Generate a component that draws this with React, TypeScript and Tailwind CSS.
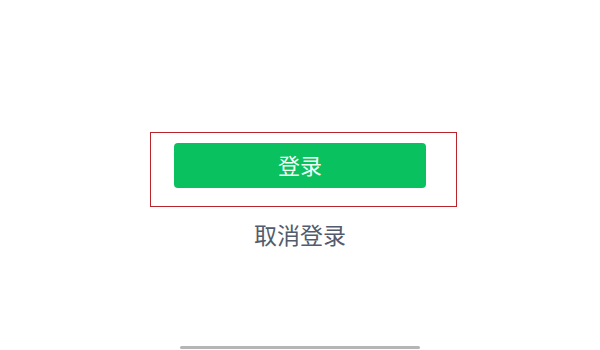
export default function App() {
  return (
    <div
      className="w-[600px] h-[350px] bg-white flex flex-col items-center overflow-hidden"
      style={{ fontFamily: '"Noto Sans CJK SC", "Noto Sans", sans-serif' }}
    >
      <div className="mt-[132px] ml-[7px] w-[307px] h-[75px] border-[1.5px] border-[#b8252b] pl-[23px] pt-[10px]">
        <div className="w-[252px] h-[45px] rounded-[4px] bg-[#0ac15f] flex items-center justify-center pb-[3px] text-[22px] text-[#f4fff6]">
          登录
        </div>
      </div>
      <div className="mt-[13px] text-[23px] leading-[28px] text-[#525c6c]">取消登录</div>
      <div className="mt-auto mb-[1px] w-[240px] h-[3px] rounded-full bg-[#b5b5b5]" />
    </div>
  );
}
